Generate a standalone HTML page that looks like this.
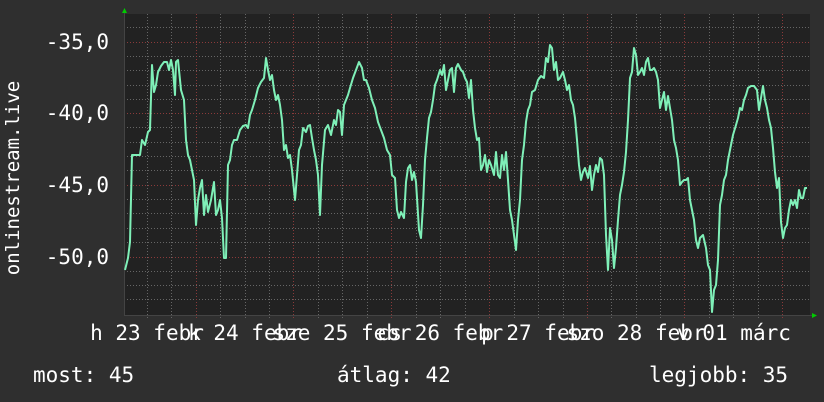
<!DOCTYPE html><html><head><style>
body{margin:0;width:824px;height:402px;background:#2f2f2f;overflow:hidden}
svg{display:block}
text{font-family:"DejaVu Sans Mono","Liberation Mono",monospace;font-size:21px;fill:#fff}
</style></head><body>
<svg width="824" height="402" xmlns="http://www.w3.org/2000/svg">
<rect x="0" y="0" width="824" height="402" fill="#2f2f2f"/>
<rect x="124" y="14" width="686" height="301" fill="#222"/>
<g stroke="#666" stroke-width="1" stroke-dasharray="1,2">
<line x1="124" x2="810" y1="27.5" y2="27.5"/><line x1="124" x2="810" y1="56.5" y2="56.5"/><line x1="124" x2="810" y1="70.5" y2="70.5"/><line x1="124" x2="810" y1="85.5" y2="85.5"/><line x1="124" x2="810" y1="99.5" y2="99.5"/><line x1="124" x2="810" y1="127.5" y2="127.5"/><line x1="124" x2="810" y1="142.5" y2="142.5"/><line x1="124" x2="810" y1="156.5" y2="156.5"/><line x1="124" x2="810" y1="170.5" y2="170.5"/><line x1="124" x2="810" y1="199.5" y2="199.5"/><line x1="124" x2="810" y1="213.5" y2="213.5"/><line x1="124" x2="810" y1="228.5" y2="228.5"/><line x1="124" x2="810" y1="242.5" y2="242.5"/><line x1="124" x2="810" y1="271.5" y2="271.5"/><line x1="124" x2="810" y1="285.5" y2="285.5"/><line x1="124" x2="810" y1="299.5" y2="299.5"/>
<line y1="14" y2="318" x1="147.5" x2="147.5"/><line y1="14" y2="318" x1="171.5" x2="171.5"/><line y1="14" y2="318" x1="245.5" x2="245.5"/><line y1="14" y2="318" x1="220.5" x2="220.5"/><line y1="14" y2="318" x1="269.5" x2="269.5"/><line y1="14" y2="318" x1="318.5" x2="318.5"/><line y1="14" y2="318" x1="342.5" x2="342.5"/><line y1="14" y2="318" x1="367.5" x2="367.5"/><line y1="14" y2="318" x1="416.5" x2="416.5"/><line y1="14" y2="318" x1="440.5" x2="440.5"/><line y1="14" y2="318" x1="465.5" x2="465.5"/><line y1="14" y2="318" x1="514.5" x2="514.5"/><line y1="14" y2="318" x1="538.5" x2="538.5"/><line y1="14" y2="318" x1="563.5" x2="563.5"/><line y1="14" y2="318" x1="611.5" x2="611.5"/><line y1="14" y2="318" x1="636.5" x2="636.5"/><line y1="14" y2="318" x1="660.5" x2="660.5"/><line y1="14" y2="318" x1="709.5" x2="709.5"/><line y1="14" y2="318" x1="733.5" x2="733.5"/><line y1="14" y2="318" x1="758.5" x2="758.5"/>
</g>
<g stroke="#8a3a3a" stroke-width="1" stroke-dasharray="1,2">
<line x1="124" x2="810" y1="42.5" y2="42.5"/><line x1="124" x2="810" y1="113.5" y2="113.5"/><line x1="124" x2="810" y1="185.5" y2="185.5"/><line x1="124" x2="810" y1="257.5" y2="257.5"/>
<line y1="14" y2="318" x1="196.5" x2="196.5"/><line y1="14" y2="318" x1="293.5" x2="293.5"/><line y1="14" y2="318" x1="391.5" x2="391.5"/><line y1="14" y2="318" x1="489.5" x2="489.5"/><line y1="14" y2="318" x1="587.5" x2="587.5"/><line y1="14" y2="318" x1="684.5" x2="684.5"/><line y1="14" y2="318" x1="782.5" x2="782.5"/>
</g>
<line x1="124" x2="813" y1="315.5" y2="315.5" stroke="#444"/>
<line x1="124.5" x2="124.5" y1="10" y2="315" stroke="#444"/>
<polygon points="122,13 127,13 124.5,8" fill="#0c0"/>
<polygon points="812,313 812,318 817,315.5" fill="#0c0"/>
<polyline fill="none" stroke="#7ff0b8" stroke-width="2" stroke-linejoin="round" points="125,270 128,258 130,242 132,155 136,155 140,155 142,140 145,145 148,132 150,130 152,65 154,92 156,85 158,72 161,66 164,62 167,62 169,70 171,60 173,70 175,95 176,62 178,60 181,90 184,100 186,140 188,155 190,160 192,170 194,180 196,225 198,200 200,188 202,180 204,215 206,195 208,212 211,200 214,182 216,215 218,210 220,200 222,218 224,258 226,258 228,165 230,160 232,145 234,140 237,140 240,130 243,126 246,125 248,128 250,115 252,110 255,100 258,88 261,82 264,78 266,58 268,70 270,80 272,75 274,90 276,100 278,95 280,105 282,120 284,150 286,145 288,158 290,155 292,170 295,200 297,175 299,150 301,145 303,128 306,132 308,126 310,125 312,138 314,150 316,160 318,175 320,215 322,165 325,130 328,125 331,135 334,120 336,125 338,110 340,112 342,135 344,105 346,100 348,95 350,88 353,78 356,70 359,62 362,68 364,80 366,80 369,88 372,100 375,108 378,122 381,130 384,138 387,150 390,155 392,175 395,178 397,210 399,218 401,212 404,218 406,182 408,168 410,165 412,180 414,172 416,182 419,230 421,238 423,205 425,160 427,138 429,118 431,112 433,100 435,85 437,80 440,70 442,75 444,65 446,90 448,80 450,70 452,68 454,92 456,68 458,64 461,70 463,72 465,78 467,82 469,98 471,80 473,110 475,128 477,140 479,138 481,170 483,165 485,155 487,172 489,160 491,165 494,175 496,152 498,175 500,178 502,155 504,170 506,152 508,180 510,210 512,220 514,235 516,250 518,220 520,200 522,160 524,145 526,122 528,110 530,105 532,92 535,90 538,80 541,76 544,78 546,58 548,62 550,45 552,48 554,70 556,62 558,80 560,78 563,72 565,80 567,90 569,85 571,100 573,105 575,118 577,140 579,165 581,180 583,172 585,168 588,178 590,166 592,190 594,175 596,165 598,172 600,158 602,160 604,175 606,235 608,270 610,228 612,240 614,268 616,248 618,220 620,195 622,185 624,172 626,152 628,120 630,78 632,72 634,48 636,55 638,75 640,72 642,68 644,75 646,62 648,58 650,70 652,70 654,68 656,72 658,80 660,108 662,100 664,92 666,110 668,96 670,108 672,120 674,140 676,148 678,160 680,185 682,182 684,180 686,180 688,178 690,200 692,210 694,220 696,240 698,248 700,238 703,235 706,248 708,265 710,270 712,312 714,290 716,285 718,260 720,205 722,195 724,180 726,175 728,160 730,150 733,135 736,125 738,118 740,108 742,110 744,100 746,95 748,88 751,86 754,86 757,90 759,110 761,98 763,86 765,100 767,108 769,120 771,128 773,148 775,172 777,188 779,178 781,222 783,238 785,228 787,225 789,210 791,200 793,205 795,200 797,208 799,190 801,198 803,198 805,188 807,188"/>
<g text-anchor="end">
<text x="109" y="49">-35,0</text>
<text x="109" y="120">-40,0</text>
<text x="109" y="192">-45,0</text>
<text x="109" y="264">-50,0</text>
</g>
<text transform="translate(19,178) rotate(-90)" text-anchor="middle" style="font-size:19px">onlinestream.live</text>
<g text-anchor="middle">
<text x="147" y="340">h 23 febr</text>
<text x="245" y="340">k 24 febr</text>
<text x="342" y="340">sze 25 febr</text>
<text x="440" y="340">cs 26 febr</text>
<text x="538" y="340">p 27 febr</text>
<text x="636" y="340">szo 28 febr</text>
<text x="734" y="340">v 01 márc</text>
</g>
<text x="33" y="382">most: 45</text>
<text x="337" y="382">átlag: 42</text>
<text x="649" y="382">legjobb: 35</text>
</svg>
</body></html>
